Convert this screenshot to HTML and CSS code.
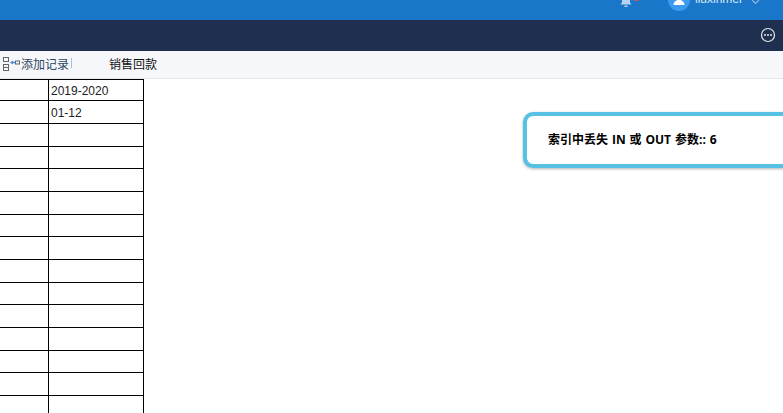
FILE: index.html
```html
<!DOCTYPE html>
<html lang="zh">
<head>
<meta charset="utf-8">
<title>销售回款</title>
<link rel="stylesheet" href="styles.css">
</head>
<body>
<header class="topbar">
  <div class="bell">
    <svg width="12" height="7" viewBox="0 0 12 7"><path d="M2 0V2.500L0.500 4.500H11.500L10 2.500V0Z" fill="#b5d2ef"/><rect x="4.500" y="5.500" width="3" height="1.500" fill="#b5d2ef"/></svg>
    <span class="bell-dot"></span>
  </div>
  <div class="avatar">
    <svg width="22" height="22" viewBox="0 0 22 22"><path d="M5.500 16C5.500 13 8 11 11 11C14 11 16.500 13 16.500 16Z" fill="#fff"/></svg>
  </div>
  <span class="username">liuxinmei</span>
  <svg class="chevron" width="9" height="5" viewBox="0 0 9 5"><path d="M1 0L4.500 3.500L8 0" fill="none" stroke="#8fb8e6" stroke-width="1.200"/></svg>
</header>
<nav class="navbar">
  <svg width="16" height="16" viewBox="0 0 16 16"><circle cx="8" cy="8" r="6.500" fill="none" stroke="#e4e6ea" stroke-width="1.200"/><circle cx="5" cy="8" r="1" fill="#e4e6ea"/><circle cx="8" cy="8" r="1" fill="#e4e6ea"/><circle cx="11" cy="8" r="1" fill="#e4e6ea"/></svg>
</nav>
<div class="toolbar">
  <svg class="add-icon" width="22" height="18" viewBox="0 0 22 18"><g fill="none" stroke="#666"><rect x="3.500" y="3.500" width="5" height="4"/><rect x="3.500" y="10.500" width="5" height="6"/><path d="M3.500 13.500H8.500"/></g><path d="M10 8.500L13 6.500V10.500Z" fill="#3f8fe6"/><path d="M12 8.500H15" stroke="#3f8fe6" stroke-width="1.500"/><rect x="15.500" y="7" width="4" height="3" fill="none" stroke="#666"/></svg>
  <span class="add-label">添加记录</span>
  <span class="sep"></span>
  <span class="title">销售回款</span>
</div>
<main class="content">
  <div class="sheet">
    <div class="cell"></div><div class="cell">2019-2020</div>
    <div class="cell"></div><div class="cell">01-12</div>
    <div class="cell"></div><div class="cell"></div>
    <div class="cell"></div><div class="cell"></div>
    <div class="cell"></div><div class="cell"></div>
    <div class="cell"></div><div class="cell"></div>
    <div class="cell"></div><div class="cell"></div>
    <div class="cell"></div><div class="cell"></div>
    <div class="cell"></div><div class="cell"></div>
    <div class="cell"></div><div class="cell"></div>
    <div class="cell"></div><div class="cell"></div>
    <div class="cell"></div><div class="cell"></div>
    <div class="cell"></div><div class="cell"></div>
    <div class="cell"></div><div class="cell"></div>
    <div class="cell"></div><div class="cell"></div>
  </div>
  <div class="toast">索引中丢失 IN 或 OUT 参数:: 6</div>
</main>
</body>
</html>
```
FILE: styles.css
```css
* { box-sizing: border-box; }
html, body { margin: 0; height: 413px; overflow: hidden; background: #fff; }
body { font-family: "Liberation Sans", "Noto Sans CJK SC", sans-serif; color: #000; width: 783px; }

.topbar { height: 20px; background: #1976c8; display: flex; align-items: flex-start; overflow: hidden; padding-left: 620px; color: #fff; }
.bell { width: 14px; height: 7px; position: relative; flex: none; }
.bell svg { display: block; }
.bell-dot { position: absolute; left: 13px; top: -6px; width: 7px; height: 7px; border-radius: 50%; background: #e0524f; }
.avatar { width: 22px; height: 22px; border-radius: 50%; background: #3c9bf0; margin: -11px 0 0 34px; flex: none; }
.avatar svg { display: block; }
.username { font-size: 12px; margin: -8px 0 0 5px; line-height: 14px; color: #d9e8f7; }
.chevron { margin-left: 9px; flex: none; }

.navbar { height: 31px; background: #1f2f4f; display: flex; align-items: center; justify-content: flex-end; padding: 0 7px 2px 0; }

.toolbar { height: 28px; background: #f5f7fa; border-bottom: 1px solid #e6e8eb; display: flex; align-items: center; padding-bottom: 3px; font-size: 12px; }
.add-icon { margin-right: -1px; flex: none; }
.add-label { color: #2f4560; font-size: 12px; }
.sep { width: 1px; height: 10px; background: #bbb; margin-left: 2px; }
.title { margin-left: 37px; color: #111; font-size: 12px; }

.content { height: 334px; position: relative; }
.sheet { width: 144px; margin-top: -0.35px; display: grid; grid-template-columns: 49px 95px; grid-template-rows: 21.667px; grid-auto-rows: 22.667px; border-right: 1px solid #000; border-top: 1px solid #000; }
.cell { border-bottom: 1px solid #000; font-size: 12px; color: #222; padding: 4px 0 0 2px; line-height: 16px; }
.cell:nth-child(-n+2) { padding-top: 3px; }
.cell:nth-child(odd) { border-right: 1px solid #000; }

.toast { position: absolute; left: 523px; top: 33px; width: 300px; height: 56px; background: #fff; border: 4px solid #57c1e4; border-radius: 10px; box-shadow: 0 1px 3px rgba(0,0,0,.3); font-size: 12px; font-weight: 700; padding-left: 21px; line-height: 48px; word-spacing: 0.8px; font-family: "Open Sans", "Noto Sans CJK SC", sans-serif; }
```
